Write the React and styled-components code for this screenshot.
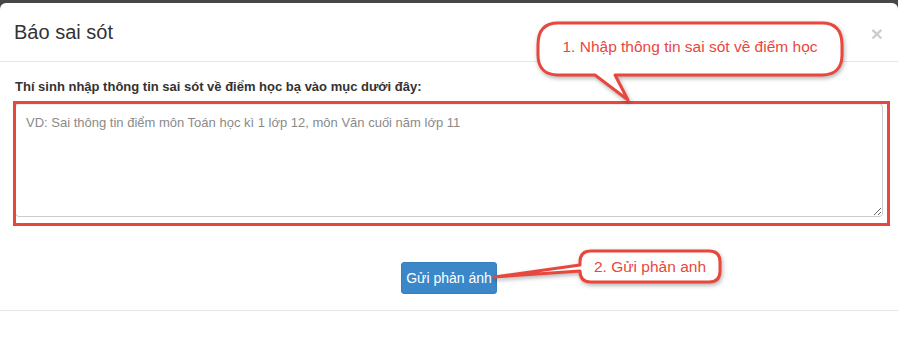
import React from 'react';
import styled, { createGlobalStyle } from 'styled-components';

const GlobalStyle = createGlobalStyle`
    html, body {
        margin: 0;
        padding: 0;
        height: 100%;
        background: #474747;
        overflow: hidden;
    }
`;

const Page = styled.div`
    position: relative;
    min-height: 100vh;
    padding-top: 3px;
    box-sizing: border-box;
    font-family: "Liberation Sans", Arial, sans-serif;
    display: flex;
    flex-direction: column;
`;

const Modal = styled.div`
    flex: 1;
    background: #fff;
    border-radius: 6px 6px 0 0;
    color: #333;
`;

const Header = styled.div`
    display: flex;
    justify-content: space-between;
    align-items: center;
    padding: 15px 15px 15px 14px;
    border-bottom: 1px solid #e5e5e5;
`;

const Title = styled.h4`
    margin: 0;
    font-size: 20px;
    line-height: 28px;
    font-weight: normal;
    color: #333;
`;

const Close = styled.button`
    background: none;
    border: 0;
    padding: 0;
    margin-top: 2px;
    font-family: inherit;
    font-size: 21px;
    font-weight: bold;
    line-height: 1;
    color: #000;
    opacity: 0.2;
    cursor: pointer;
`;

const Body = styled.div`
    padding: 15px;
`;

const Label = styled.label`
    display: block;
    margin: 0 0 6px 0;
    font-size: 13px;
    line-height: 20px;
    font-weight: bold;
    color: #333;
`;

const Field = styled.div`
    position: relative;
`;

const TextArea = styled.textarea`
    display: block;
    width: 100%;
    height: 114px;
    box-sizing: border-box;
    padding: 10px;
    border: 1px solid #ccc;
    border-radius: 4px;
    box-shadow: inset 0 1px 1px rgba(0, 0, 0, 0.075);
    font-family: inherit;
    font-size: 13px;
    line-height: 18px;
    color: #555;
    resize: vertical;
    outline: none;
    &::placeholder {
        color: #8a8a8a;
        opacity: 1;
    }
`;

// red annotation frame drawn over the textarea
const Highlight = styled.div`
    position: absolute;
    top: -2px;
    left: -2px;
    right: -7px;
    bottom: -9px;
    border: 3px solid #e8473e;
    pointer-events: none;
`;

const ButtonRow = styled.div`
    display: flex;
    justify-content: center;
    padding: 30px 0 16px 0;
    border-bottom: 1px solid #e5e5e5;
`;

const SubmitButton = styled.button`
    height: 32px;
    width: 96px;
    padding: 0;
    border: 1px solid #367fbd;
    border-radius: 3px;
    background: #3a87c9;
    color: #fff;
    font-family: inherit;
    font-size: 14px;
    cursor: pointer;
`;

const Callout = styled.div`
    position: absolute;
    left: ${p => p.x}px;
    top: ${p => p.y}px;
    width: ${p => p.w}px;
    height: ${p => p.h}px;
    display: flex;
    align-items: center;
    justify-content: center;
    padding-bottom: ${p => p.lift || 0}px;
    box-sizing: border-box;
    color: #e8473e;
    font-size: 15.5px;
    white-space: nowrap;
    svg {
        position: absolute;
        left: ${p => p.sx}px;
        top: ${p => p.sy}px;
        overflow: visible;
        filter: drop-shadow(1px 2px 2px rgba(0, 0, 0, 0.3));
    }
    span {
        position: relative;
    }
`;

function Bubble({ path, width, height }) {
    return (
        <svg width={width} height={height} viewBox={`0 0 ${width} ${height}`}>
            <path d={path} fill="#fff" stroke="#e8473e" strokeWidth="3" strokeLinejoin="round" />
        </svg>
    );
}

function App() {
    return (
        <>
            <GlobalStyle />
            <Page>
                <Modal>
                    <Header>
                        <Title>Báo sai sót</Title>
                        <Close type="button">×</Close>
                    </Header>
                    <Body>
                        <Label>Thí sinh nhập thông tin sai sót về điểm học bạ vào mục dưới đây:</Label>
                        <Field>
                            <TextArea placeholder="VD: Sai thông tin điểm môn Toán học kì 1 lớp 12, môn Văn cuối năm lớp 11" />
                            <Highlight />
                        </Field>
                    </Body>
                    <ButtonRow>
                        <SubmitButton type="button">Gửi phản ánh</SubmitButton>
                    </ButtonRow>
                </Modal>

                <Callout x={538} y={23} w={304} h={52} sx={-8} sy={-8} lift={4}>
                    <Bubble
                        width={330}
                        height={95}
                        path="M 28 8 H 292 C 304 8 312 14 312 30 V 40 C 312 54 304 60 292 60 H 85 L 98 85 L 65 60 H 28 C 16 60 8 54 8 40 V 30 C 8 14 16 8 28 8 Z"
                    />
                    <span>1. Nhập thông tin sai sót về điểm học</span>
                </Callout>

                <Callout x={580} y={251} w={140} h={31} sx={-90} sy={-8}>
                    <Bubble
                        width={240}
                        height={50}
                        path="M 101 8 H 219 C 226 8 230 11 230 19 V 28 C 230 36 226 39 219 39 H 101 C 94 39 90 36 90 28 L 4 34 L 90 22 V 19 C 90 11 94 8 101 8 Z"
                    />
                    <span>2. Gửi phản anh</span>
                </Callout>
            </Page>
        </>
    );
}

export default App;
